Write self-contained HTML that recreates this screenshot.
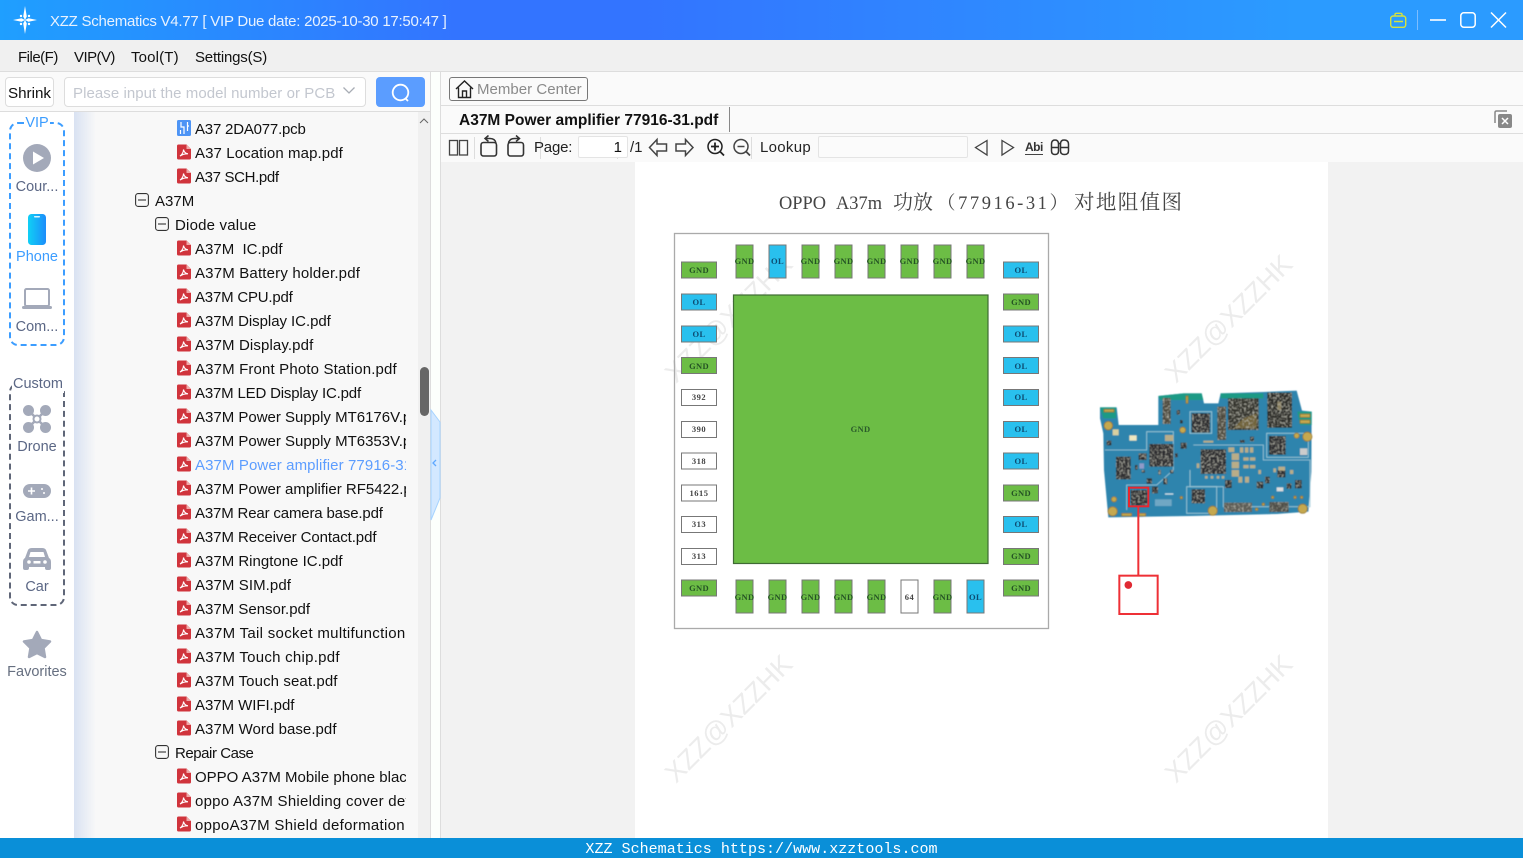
<!DOCTYPE html>
<html><head><meta charset="utf-8"><title>XZZ Schematics</title>
<style>
*{box-sizing:border-box}
html,body{margin:0;padding:0;width:1523px;height:858px;overflow:hidden;background:#fff;font-family:"Liberation Sans","Noto Sans CJK SC",sans-serif;color:#111}
.a{position:absolute;white-space:nowrap}
#tb{left:0;top:0;width:1523px;height:40px;background:linear-gradient(90deg,#1f9fff 0%,#3374ff 30%,#3374ff 42%,#2b9bff 85%,#2b9bff 100%)}
#menu{left:0;top:40px;width:1523px;height:32px;background:#f0f0f0;border-bottom:1px solid #ddd;font-size:15px}
#menu span{position:absolute;top:9px}
.row{position:absolute;left:0;height:24px;line-height:28px;font-size:15px;color:#111;width:406px;overflow:hidden;white-space:nowrap}
.row span{position:absolute;top:0}
.nav{position:absolute;left:0;width:74px;text-align:center;font-size:14.5px;color:#5b6785}
svg{position:absolute;overflow:visible}
</style></head><body>
<svg width="0" height="0" style="left:0;top:0"><defs>
<symbol id="pdf" viewBox="0 0 14 15"><path d="M1.500 0H9.500L14 4.500V13.500Q14 15 12.500 15H1.500Q0 15 0 13.500V1.500Q0 0 1.500 0Z" fill="#d0343c"/><path d="M9.500 0L14 4.500H9.500Z" fill="#f0a8a8"/><path d="M3 11.500C5 10.500 6.500 7.500 6.500 5C7 7.500 8.500 9 11 9.300C8.500 9.200 5.500 9.800 3 11.500Z" fill="none" stroke="#fff" stroke-width="1.100"/></symbol>
<symbol id="minus" viewBox="0 0 14 14"><rect x=".6" y=".6" width="12.800" height="12.800" rx="2.500" fill="none" stroke="#333" stroke-width="1.100"/><path d="M3 7H11" stroke="#333" stroke-width="1.100"/></symbol>
</defs></svg>

<div class="a" id="tb"></div>
<svg style="left:12px;top:7px" width="26" height="26" viewBox="0 0 26 26"><path d="M13 -1L14.800 9.500L13 13L11.200 9.500ZM13 27L14.800 16.500L13 13L11.200 16.500ZM1 13L9.500 11.200L13 13L9.500 14.800ZM25 13L16.500 11.200L13 13L16.500 14.800Z" fill="#fff"/><circle cx="9" cy="9" r="1.200" fill="#fff"/><circle cx="17" cy="9" r="1.200" fill="#fff"/><circle cx="9" cy="17" r="1.200" fill="#fff"/><circle cx="17" cy="17" r="1.200" fill="#fff"/></svg>
<div class="a" style="left:50px;top:13px;font-size:15px;color:#e8f2ff;letter-spacing:-.245px">XZZ Schematics V4.77 [ VIP Due date: 2025-10-30 17:50:47 ]</div>
<svg style="left:1360px;top:0" width="163" height="40" fill="none"><rect x="30.700" y="16" width="15" height="11.300" rx="2.500" stroke="#d6e23e" stroke-width="1.400"/><path d="M35 16V14.500Q35 13.300 36.500 13.300H40.500Q42 13.300 42 14.500V16M34 21.500H43" stroke="#d6e23e" stroke-width="1.400"/><path d="M57.500 10V30" stroke="#7dbdff" stroke-width="1"/><path d="M70 20H86" stroke="#fff" stroke-width="1.600"/><rect x="100.800" y="12.800" width="14.400" height="14.400" rx="3" stroke="#fff" stroke-width="1.500"/><path d="M131 12.500L146 27.500M146 12.500L131 27.500" stroke="#fff" stroke-width="1.500"/></svg>

<div class="a" id="menu"><span style="left:18px;letter-spacing:-.5px">File(F)</span><span style="left:74px;letter-spacing:-.55px">VIP(V)</span><span style="left:131px;letter-spacing:.15px">Tool(T)</span><span style="left:195px;letter-spacing:-.2px">Settings(S)</span></div>

<!-- Left top search -->
<div class="a" style="left:0;top:72px;width:430px;height:40px;background:#fafafa;border-bottom:1px solid #ddd"></div>
<div class="a" style="left:5px;top:77px;width:49px;height:30px;border:1px solid #ddd;border-radius:4px;background:#fff;font-size:15.200px;line-height:31px;text-align:center">Shrink</div>
<div class="a" style="left:64px;top:77px;width:302px;height:30px;border:1px solid #ddd;border-radius:4px;background:#fff;font-size:15px;line-height:31px;padding-left:8px;color:#c3c7cf;letter-spacing:.06px">Please input the model number or PCB</div>
<svg style="left:342px;top:86px" width="14" height="10" fill="none"><path d="M1.500 1.500L7 7L12.500 1.500" stroke="#a8adb5" stroke-width="1.300"/></svg>
<div class="a" style="left:376px;top:77px;width:49px;height:30px;background:#5b9dff;border-radius:4px"></div>
<svg style="left:390px;top:82px" width="22" height="21" fill="none"><circle cx="10.500" cy="10.500" r="7.800" stroke="#fff" stroke-width="1.800"/><path d="M15.500 16.500L18 19" stroke="#fff" stroke-width="1.800"/></svg>

<!-- Sidebar -->
<div class="a" style="left:0;top:112px;width:74px;height:726px;background:#fff"></div>
<div class="a" style="left:9px;top:122px;width:56px;height:224px;border:2px dashed #3c9dff;border-radius:9px"></div>
<div class="a" style="left:24px;top:114px;width:26px;height:18px;background:#fff;text-align:center;font-size:14.500px;color:#3c9dff;line-height:18px">VIP</div>
<svg style="left:23px;top:144px" width="28" height="28"><circle cx="14" cy="14" r="14" fill="#a3a9b9"/><path d="M10 7.500L21 14L10 20.500Z" fill="#fff"/></svg>
<div class="nav" style="top:179px">Cour...</div>
<svg style="left:28px;top:214px" width="18" height="31"><defs><linearGradient id="ph" x1="0" x2="1" y1="0" y2="0"><stop offset="0" stop-color="#10d0f5"/><stop offset="1" stop-color="#1c8dfb"/></linearGradient></defs><rect width="18" height="31" rx="3.500" fill="url(#ph)"/><rect x="6" y="2" width="6" height="1.500" rx=".7" fill="#d8f6ff"/></svg>
<div class="nav" style="top:249px;color:#3c9dff">Phone</div>
<svg style="left:22px;top:288px" width="30" height="22" fill="none"><rect x="3" y="1" width="24" height="17" rx="1.500" stroke="#a3a9b9" stroke-width="2"/><rect x="0" y="18" width="30" height="3" rx="1.500" fill="#a3a9b9"/></svg>
<div class="nav" style="top:319px">Com...</div>

<div class="a" style="left:9px;top:383px;width:56px;height:223px;border:2px dashed #5f6678;border-radius:9px"></div>
<div class="a" style="left:12px;top:375px;width:52px;height:18px;background:#fff;text-align:center;font-size:14.500px;color:#5b6785;line-height:18px">Custom</div>
<svg style="left:22px;top:404px" width="30" height="30" fill="none"><path d="M8 8L22 22M22 8L8 22" stroke="#a3a9b9" stroke-width="2.500"/><circle cx="15" cy="15" r="3.500" fill="#fff" stroke="#a3a9b9" stroke-width="2"/><circle cx="6.500" cy="6.500" r="5.500" fill="#a3a9b9"/><circle cx="23.500" cy="6.500" r="5.500" fill="#a3a9b9"/><circle cx="6.500" cy="23.500" r="5.500" fill="#a3a9b9"/><circle cx="23.500" cy="23.500" r="5.500" fill="#a3a9b9"/></svg>
<div class="nav" style="top:439px">Drone</div>
<svg style="left:23px;top:484px" width="28" height="14"><rect width="28" height="14" rx="7" fill="#a3a9b9"/><path d="M5 7H12M8.500 3.500V10.500" stroke="#fff" stroke-width="1.600"/><circle cx="19" cy="5" r="1" fill="#fff"/><circle cx="21" cy="9" r="1" fill="#fff"/></svg>
<div class="nav" style="top:509px">Gam...</div>
<svg style="left:23px;top:547px" width="28" height="24"><path d="M2 11L5 3Q6 1 9 1H19Q22 1 23 3L26 11Q28 12 28 15V21Q28 23 26 23H24Q22 23 22 21V20H6V21Q6 23 4 23H2Q0 23 0 21V15Q0 12 2 11Z" fill="#a3a9b9"/><path d="M6 10L7.500 5H20.500L22 10Z" fill="#fff"/><circle cx="6" cy="15" r="1.800" fill="#fff"/><circle cx="22" cy="15" r="1.800" fill="#fff"/><rect x="10.500" y="14" width="7" height="2.500" fill="#fff"/></svg>
<div class="nav" style="top:579px">Car</div>
<svg style="left:22px;top:630px" width="30" height="29"><path d="M15 2L19 10L28 11.500L21.500 18L23 27L15 23L7 27L8.500 18L2 11.500L11 10Z" fill="#a3a9b9" stroke="#a3a9b9" stroke-width="2.500" stroke-linejoin="round"/></svg>
<div class="nav" style="top:664px;color:#666f80">Favorites</div>

<!-- Tree -->
<div class="a" style="left:74px;top:112px;width:344px;height:726px;background:linear-gradient(90deg,#d9e2f2 0,#f8f8f8 22px,#f8f8f8 100%)"></div>
<div class="a" style="left:74px;top:112px;width:344px;height:726px;overflow:hidden">
<div style="position:absolute;left:-74px;top:-112px;width:420px;height:900px">
<svg style="left:177px;top:120px" width="14" height="16"><rect width="14" height="16" rx="1.500" fill="#4d94f5"/><path d="M4 2V7H7V14M3.500 10V14M10.500 2V6H12M10.500 6V11" stroke="#fff" stroke-width="1.200" fill="none"/></svg>
<div class="row" style="top:116px"><span style="left:195px;letter-spacing:-.2px">A37 2DA077.pcb</span></div>
<svg style="left:177px;top:144px" width="14" height="16"><use href="#pdf"/></svg><div class="row" style="top:140px"><span style="left:195px;letter-spacing:.1px">A37 Location map.pdf</span></div>
<svg style="left:177px;top:168px" width="14" height="16"><use href="#pdf"/></svg><div class="row" style="top:164px"><span style="left:195px;letter-spacing:-.35px">A37 SCH.pdf</span></div>
<svg style="left:135px;top:193px" width="14" height="14"><use href="#minus"/></svg><div class="row" style="top:188px"><span style="left:155px">A37M</span></div>
<svg style="left:155px;top:217px" width="14" height="14"><use href="#minus"/></svg><div class="row" style="top:212px"><span style="left:175px;letter-spacing:.2px">Diode value</span></div>
<svg style="left:177px;top:240px" width="14" height="16"><use href="#pdf"/></svg><div class="row" style="top:236px"><span style="left:195px">A37M&nbsp; IC.pdf</span></div>
<svg style="left:177px;top:264px" width="14" height="16"><use href="#pdf"/></svg><div class="row" style="top:260px"><span style="left:195px;letter-spacing:.18px">A37M Battery holder.pdf</span></div>
<svg style="left:177px;top:288px" width="14" height="16"><use href="#pdf"/></svg><div class="row" style="top:284px"><span style="left:195px;letter-spacing:-.2px">A37M CPU.pdf</span></div>
<svg style="left:177px;top:312px" width="14" height="16"><use href="#pdf"/></svg><div class="row" style="top:308px"><span style="left:195px;letter-spacing:-.05px">A37M Display IC.pdf</span></div>
<svg style="left:177px;top:336px" width="14" height="16"><use href="#pdf"/></svg><div class="row" style="top:332px"><span style="left:195px;letter-spacing:.12px">A37M Display.pdf</span></div>
<svg style="left:177px;top:360px" width="14" height="16"><use href="#pdf"/></svg><div class="row" style="top:356px"><span style="left:195px;letter-spacing:.15px">A37M Front Photo Station.pdf</span></div>
<svg style="left:177px;top:384px" width="14" height="16"><use href="#pdf"/></svg><div class="row" style="top:380px"><span style="left:195px;letter-spacing:-.18px">A37M LED Display IC.pdf</span></div>
<svg style="left:177px;top:408px" width="14" height="16"><use href="#pdf"/></svg><div class="row" style="top:404px"><span style="left:195px">A37M Power Supply MT6176V.pdf</span></div>
<svg style="left:177px;top:432px" width="14" height="16"><use href="#pdf"/></svg><div class="row" style="top:428px"><span style="left:195px">A37M Power Supply MT6353V.pdf</span></div>
<svg style="left:177px;top:456px" width="14" height="16"><use href="#pdf"/></svg><div class="row" style="top:452px"><span style="left:195px;color:#5c9dff;letter-spacing:.1px">A37M Power amplifier 77916-31.pdf</span></div>
<svg style="left:177px;top:480px" width="14" height="16"><use href="#pdf"/></svg><div class="row" style="top:476px"><span style="left:195px">A37M Power amplifier RF5422.pdf</span></div>
<svg style="left:177px;top:504px" width="14" height="16"><use href="#pdf"/></svg><div class="row" style="top:500px"><span style="left:195px;letter-spacing:-.16px">A37M Rear camera base.pdf</span></div>
<svg style="left:177px;top:528px" width="14" height="16"><use href="#pdf"/></svg><div class="row" style="top:524px"><span style="left:195px;letter-spacing:-.08px">A37M Receiver Contact.pdf</span></div>
<svg style="left:177px;top:552px" width="14" height="16"><use href="#pdf"/></svg><div class="row" style="top:548px"><span style="left:195px">A37M Ringtone IC.pdf</span></div>
<svg style="left:177px;top:576px" width="14" height="16"><use href="#pdf"/></svg><div class="row" style="top:572px"><span style="left:195px;letter-spacing:.08px">A37M SIM.pdf</span></div>
<svg style="left:177px;top:600px" width="14" height="16"><use href="#pdf"/></svg><div class="row" style="top:596px"><span style="left:195px">A37M Sensor.pdf</span></div>
<svg style="left:177px;top:624px" width="14" height="16"><use href="#pdf"/></svg><div class="row" style="top:620px"><span style="left:195px;letter-spacing:.3px">A37M Tail socket multifunction</span></div>
<svg style="left:177px;top:648px" width="14" height="16"><use href="#pdf"/></svg><div class="row" style="top:644px"><span style="left:195px;letter-spacing:.26px">A37M Touch chip.pdf</span></div>
<svg style="left:177px;top:672px" width="14" height="16"><use href="#pdf"/></svg><div class="row" style="top:668px"><span style="left:195px;letter-spacing:.1px">A37M Touch seat.pdf</span></div>
<svg style="left:177px;top:696px" width="14" height="16"><use href="#pdf"/></svg><div class="row" style="top:692px"><span style="left:195px;letter-spacing:-.05px">A37M WIFI.pdf</span></div>
<svg style="left:177px;top:720px" width="14" height="16"><use href="#pdf"/></svg><div class="row" style="top:716px"><span style="left:195px;letter-spacing:.05px">A37M Word base.pdf</span></div>
<svg style="left:155px;top:745px" width="14" height="14"><use href="#minus"/></svg><div class="row" style="top:740px"><span style="left:175px;letter-spacing:-.45px">Repair Case</span></div>
<svg style="left:177px;top:768px" width="14" height="16"><use href="#pdf"/></svg><div class="row" style="top:764px"><span style="left:195px">OPPO A37M Mobile phone black screen</span></div>
<svg style="left:177px;top:792px" width="14" height="16"><use href="#pdf"/></svg><div class="row" style="top:788px"><span style="left:195px;letter-spacing:.25px">oppo A37M Shielding cover deformation</span></div>
<svg style="left:177px;top:816px" width="14" height="16"><use href="#pdf"/></svg><div class="row" style="top:812px"><span style="left:195px;letter-spacing:.3px">oppoA37M Shield deformation</span></div>
</div></div>
<!-- Scrollbar -->
<div class="a" style="left:418px;top:112px;width:12px;height:726px;background:#f0f0f0"></div>
<svg style="left:419px;top:117px" width="10" height="8" fill="none"><path d="M1 6L5 2L9 6" stroke="#666" stroke-width="1"/></svg>
<div class="a" style="left:420px;top:367px;width:9px;height:49px;border-radius:5px;background:#666"></div>
<div class="a" style="left:430px;top:72px;width:1px;height:766px;background:#ddd"></div>
<div class="a" style="left:431px;top:72px;width:9px;height:766px;background:#fcfffc"></div>
<div class="a" style="left:440px;top:72px;width:1px;height:766px;background:#ddd"></div>
<svg style="left:431px;top:410px" width="10" height="110"><path d="M0 0L9 12V88L0 110Z" fill="#d3e8ff" stroke="#a6d3ff" stroke-width="1"/><path d="M5 50L2 53L5 56" fill="none" stroke="#5ea8ff" stroke-width="1.300"/></svg>

<!-- Right head -->
<div class="a" style="left:441px;top:72px;width:1082px;height:34px;background:#fafafa;border-bottom:1px solid #ddd"></div>
<div class="a" style="left:449px;top:77px;width:139px;height:24px;border:1px solid #777;border-radius:3px;background:#fafafa;font-size:15px;line-height:23px;padding-left:27px;color:#8a8a8a;letter-spacing:.03px">Member Center</div>
<svg style="left:455px;top:79px" width="19" height="20" fill="none" stroke="#222" stroke-width="1.400"><path d="M1 10L9.500 2L18 10M3.500 8.500V18.500H15.500V8.500M7.500 18.500V12H11.500V18.500"/></svg>
<div class="a" style="left:441px;top:106px;width:1082px;height:28px;background:#fafafa;border-bottom:1px solid #ddd"></div>
<div class="a" style="left:459px;top:112px;font-size:15.500px;font-weight:bold;color:#111">A37M Power amplifier 77916-31.pdf</div>
<div class="a" style="left:729px;top:107px;width:1px;height:25px;background:#888"></div>
<svg style="left:1494px;top:110px" width="18" height="18"><path d="M1 13V2.500Q1 1 2.500 1H13" fill="none" stroke="#888" stroke-width="1.500"/><rect x="4" y="4" width="14" height="14" rx="2" fill="#888"/><path d="M8 8L14 14M14 8L8 14" stroke="#fff" stroke-width="1.500"/></svg>

<!-- Toolbar -->
<div class="a" style="left:441px;top:134px;width:1082px;height:28px;background:#fafafa"></div>
<svg style="left:441px;top:134px" width="640" height="28" fill="none" stroke="#444" stroke-width="1.300">
<rect x="8.500" y="6.500" width="8" height="14.500"/><rect x="18.500" y="6.500" width="8" height="14.500"/>
<path d="M33.500 3V25M99.500 3V25M176.500 3V25M310.500 3V25" stroke="#ddd" stroke-width="1"/>
<rect x="40" y="8.500" width="15.500" height="13.500" rx="2.500" stroke="#333" stroke-width="1.600"/><path d="M55 9Q54 4.500 49 4.500H44.500M47.500 1.500L44 4.500L47.500 7.500" stroke="#333" stroke-width="1.500"/>
<rect x="67" y="8.500" width="15.500" height="13.500" rx="2.500" stroke="#333" stroke-width="1.600"/><path d="M67.500 9Q68.500 4.500 73.500 4.500H78M75 1.500L78.500 4.500L75 7.500" stroke="#333" stroke-width="1.500"/>
<path d="M208.500 13.500L216 5.500V10H225.500V17H216V21.500Z" stroke-width="1.500"/><path d="M252 13.500L244.500 5.500V10H235V17H244.500V21.500Z" stroke-width="1.500"/>
<circle cx="274" cy="12.500" r="7" stroke="#222" stroke-width="1.500"/><path d="M279 17.500L283 21.500" stroke="#222" stroke-width="1.800"/><path d="M270 12.500H278M274 8.500V16.500" stroke="#222" stroke-width="1.800"/>
<circle cx="300" cy="12.500" r="7" stroke-width="1.500"/><path d="M305 17.500L309 21.500" stroke-width="1.800"/><path d="M296.500 12.500H303.500" stroke-width="1.500"/>
<path d="M546 6.500L534.500 13.500L546 21Z"/><path d="M561 6.500L572.500 13.500L561 21Z"/>
<path d="M584 20.500H602" stroke-width="1"/>
<path d="M610.500 17V10Q610.500 6 614 6Q617.500 6 617.500 10V17Q617.500 20.500 614 20.500Q610.500 20.500 610.500 17ZM619.500 17V10Q619.500 6 623 6Q627.500 6 627.500 10V17Q627.500 20.500 623.500 20.500Q619.500 20.500 619.500 17ZM617.500 9.500H619.500M610.500 13.500H617.500M619.500 13.500H627.500" stroke="#333" stroke-width="1.500"/>
</svg>
<div class="a" style="left:534px;top:139px;font-size:15px;color:#222;letter-spacing:-.2px">Page:</div>
<div class="a" style="left:578px;top:136px;width:50px;height:22px;background:#fff;border:1px solid #e4e4e4;font-size:15px;line-height:21px;text-align:right;padding-right:5px;border-radius:2px">1</div>
<div class="a" style="left:630px;top:139px;font-size:15px;color:#222">/1</div>
<div class="a" style="left:760px;top:139px;font-size:15px;color:#222;letter-spacing:.3px">Lookup</div>
<div class="a" style="left:818px;top:136px;width:150px;height:22px;background:#fbfbfb;border:1px solid #e4e4e4;border-radius:2px"></div>
<div class="a" style="left:1025px;top:140px;font-size:12px;font-weight:bold;color:#333;letter-spacing:-.5px">Abi</div>

<!-- Viewer -->
<div class="a" style="left:441px;top:162px;width:1082px;height:676px;background:#f2f2f2"></div>
<div class="a" style="left:635px;top:162px;width:693px;height:676px;background:#fff"></div>

<svg style="left:0;top:0" width="1523" height="858" font-family="'Liberation Serif','Noto Serif CJK SC',serif">
<g fill="#ececec" font-size="27" font-family="'Liberation Sans',sans-serif" text-anchor="middle">
<text transform="translate(735 325) rotate(-45)">XZZ@XZZHK</text>
<text transform="translate(1235 325) rotate(-45)">XZZ@XZZHK</text>
<text transform="translate(735 725) rotate(-45)">XZZ@XZZHK</text>
<text transform="translate(1235 725) rotate(-45)">XZZ@XZZHK</text>
</g>
<g font-size="18.500" fill="#444">
<text x="779" y="209" textLength="47" lengthAdjust="spacingAndGlyphs">OPPO</text>
<text x="836" y="209" textLength="46" lengthAdjust="spacingAndGlyphs">A37m</text>
<text x="893" y="209" font-size="20" textLength="40" lengthAdjust="spacing">功放</text>
<text x="937" y="209" textLength="131" lengthAdjust="spacing">（77916-31）</text>
<text x="1074" y="209" font-size="20.500" textLength="108" lengthAdjust="spacing">对地阻值图</text>
</g>
<rect x="674.500" y="233.500" width="374" height="395" fill="none" stroke="#aaa" stroke-width="1.300"/>
<rect x="733.500" y="295" width="254.500" height="268.500" fill="#6cbd45" stroke="#3f6b34" stroke-width="1.200"/>
<text x="860.500" y="432" font-size="8.500" font-weight="bold" fill="#2a5a2a" text-anchor="middle" letter-spacing=".3">GND</text>
<g stroke="#777" stroke-width="1">
<g fill="#6cbd45"><rect x="681.500" y="262" width="35" height="16"/><rect x="681.500" y="357.500" width="35" height="16"/><rect x="681.500" y="580" width="35" height="16"/>
<rect x="1003.500" y="294" width="35" height="16"/><rect x="1003.500" y="485" width="35" height="16"/><rect x="1003.500" y="548.500" width="35" height="16"/><rect x="1003.500" y="580" width="35" height="16"/>
<rect x="736" y="245" width="17" height="33"/><rect x="802" y="245" width="17" height="33"/><rect x="835" y="245" width="17" height="33"/><rect x="868" y="245" width="17" height="33"/><rect x="901" y="245" width="17" height="33"/><rect x="934" y="245" width="17" height="33"/><rect x="967" y="245" width="17" height="33"/>
<rect x="736" y="580" width="17" height="33"/><rect x="769" y="580" width="17" height="33"/><rect x="802" y="580" width="17" height="33"/><rect x="835" y="580" width="17" height="33"/><rect x="868" y="580" width="17" height="33"/><rect x="934" y="580" width="17" height="33"/></g>
<g fill="#29c0ee"><rect x="681.500" y="294" width="35" height="16"/><rect x="681.500" y="326" width="35" height="16"/>
<rect x="1003.500" y="262" width="35" height="16"/><rect x="1003.500" y="326" width="35" height="16"/><rect x="1003.500" y="357.500" width="35" height="16"/><rect x="1003.500" y="389.500" width="35" height="16"/><rect x="1003.500" y="421.500" width="35" height="16"/><rect x="1003.500" y="453" width="35" height="16"/><rect x="1003.500" y="516.500" width="35" height="16"/>
<rect x="769" y="245" width="17" height="33"/><rect x="967" y="580" width="17" height="33"/></g>
<g fill="#fff"><rect x="681.500" y="389.500" width="35" height="16"/><rect x="681.500" y="421.500" width="35" height="16"/><rect x="681.500" y="453" width="35" height="16"/><rect x="681.500" y="485" width="35" height="16"/><rect x="681.500" y="516.500" width="35" height="16"/><rect x="681.500" y="548.500" width="35" height="16"/><rect x="901" y="580" width="17" height="33"/></g>
</g>
<g font-size="8.500" font-weight="bold" text-anchor="middle" fill="#245224" letter-spacing=".3">
<text x="699" y="273">GND</text><text x="699" y="369">GND</text><text x="699" y="591">GND</text>
<text x="1021" y="305">GND</text><text x="1021" y="496">GND</text><text x="1021" y="559">GND</text><text x="1021" y="591">GND</text>
<text x="744.500" y="264">GND</text><text x="810.500" y="264">GND</text><text x="843.500" y="264">GND</text><text x="876.500" y="264">GND</text><text x="909.500" y="264">GND</text><text x="942.500" y="264">GND</text><text x="975.500" y="264">GND</text>
<text x="744.500" y="600">GND</text><text x="777.500" y="600">GND</text><text x="810.500" y="600">GND</text><text x="843.500" y="600">GND</text><text x="876.500" y="600">GND</text><text x="942.500" y="600">GND</text>
</g>
<g font-size="8.500" font-weight="bold" text-anchor="middle" fill="#0d4a70" letter-spacing=".3">
<text x="699" y="305">OL</text><text x="699" y="337">OL</text>
<text x="1021" y="273">OL</text><text x="1021" y="337">OL</text><text x="1021" y="369">OL</text><text x="1021" y="400">OL</text><text x="1021" y="432">OL</text><text x="1021" y="464">OL</text><text x="1021" y="527">OL</text>
<text x="777.500" y="264">OL</text><text x="975.500" y="600">OL</text>
</g>
<g font-size="8.500" font-weight="bold" text-anchor="middle" fill="#444" letter-spacing=".5">
<text x="699" y="400">392</text><text x="699" y="432">390</text><text x="699" y="464">318</text><text x="699" y="496">1615</text><text x="699" y="527">313</text><text x="699" y="559">313</text><text x="909.500" y="600">64</text>
</g>

<!-- PCB (zoom coordinates) -->
<defs>
<filter id="bl" x="-5%" y="-5%" width="110%" height="110%"><feGaussianBlur stdDeviation="1.300"/></filter>
<filter id="nz" x="0" y="0" width="100%" height="100%">
<feTurbulence type="fractalNoise" baseFrequency=".16" numOctaves="2" seed="4" result="n"/>
<feColorMatrix in="n" type="matrix" values="0 0 0 0 .6  0 0 0 0 .6  0 0 0 0 .52  2 0 0 0 -.95" result="s"/>
<feComposite in="s" in2="SourceAlpha" operator="in" result="sp"/>
<feMerge><feMergeNode in="SourceGraphic"/><feMergeNode in="sp"/></feMerge>
</filter>
</defs>
<g transform="translate(1090 370) scale(.33333)">
<g filter="url(#bl)">
<path d="M30 112H80L86 165H205V78L280 70H335L342 100H385L392 70L520 66L620 62L636 122L665 125L664 305L655 425L560 432L300 438L55 442L42 300L40 190L30 145Z" fill="#2f84ad"/>
<path d="M30 112H78V145H40Z" fill="#1c9a85"/><path d="M205 78L280 70H335L340 90H210Z" fill="#1c9a85"/><path d="M392 70H520V85H392Z" fill="#1c9a85"/><path d="M622 125H665V165H630Z" fill="#1c9a85"/>
<g fill="none" stroke="#9fc9d8" stroke-width="2.500"><path d="M45 240H170V185H250V300L200 345H110V420"/><path d="M310 225H520V270H660V410H400V350H300V300"/><path d="M290 350H380V430H290Z"/><path d="M530 190H655V262H530Z"/><path d="M300 125H365V190H300Z"/></g>
<g fill="#2a2c2e" filter="url(#nz)">
<rect x="218" y="84" width="24" height="78" fill="#4e493c"/><rect x="382" y="110" width="26" height="100" fill="#4e493c"/>
<rect x="305" y="130" width="55" height="58"/><rect x="178" y="222" width="72" height="68"/><rect x="78" y="260" width="44" height="68"/>
<rect x="332" y="238" width="76" height="74"/><rect x="537" y="198" width="50" height="56"/><rect x="122" y="360" width="50" height="46"/><rect x="305" y="358" width="40" height="42"/>
<rect x="402" y="398" width="84" height="28" fill="#5c5c54"/><rect x="538" y="396" width="58" height="30" fill="#4d4d47"/>
<rect x="414" y="85" width="92" height="95" fill="#33332b"/><path d="M460 145L500 130V175H430Z" fill="#6f6238"/>
<rect x="532" y="68" width="74" height="105" fill="#292926"/><rect x="562" y="95" width="12" height="25" fill="#8a8060"/>
<rect x="272" y="218" width="18" height="18"/><rect x="146" y="250" width="24" height="20"/><rect x="186" y="350" width="18" height="20"/><rect x="170" y="325" width="16" height="16"/><rect x="220" y="325" width="12" height="18"/><rect x="562" y="300" width="24" height="22"/><rect x="615" y="330" width="20" height="25"/><rect x="405" y="330" width="20" height="24"/><rect x="500" y="335" width="20" height="20"/><rect x="525" y="320" width="14" height="20"/><rect x="50" y="212" width="14" height="14"/>
<rect x="255" y="250" width="8" height="12"/><rect x="240" y="300" width="10" height="10"/><rect x="205" y="300" width="8" height="14"/><rect x="135" y="285" width="8" height="14"/><rect x="155" y="300" width="10" height="8"/><rect x="260" y="120" width="10" height="14"/><rect x="270" y="150" width="8" height="10"/><rect x="590" y="340" width="14" height="16"/><rect x="480" y="200" width="12" height="14"/><rect x="450" y="210" width="14" height="8"/>
</g>
<g fill="#b9ad88">
<rect x="425" y="250" width="22" height="20"/><rect x="425" y="275" width="22" height="20"/><rect x="425" y="300" width="22" height="20"/><rect x="450" y="232" width="10" height="16"/><rect x="465" y="232" width="10" height="16"/><rect x="480" y="232" width="10" height="16"/><rect x="460" y="262" width="16" height="10"/><rect x="480" y="262" width="16" height="10"/><rect x="460" y="285" width="16" height="10"/><rect x="480" y="285" width="16" height="10"/><rect x="445" y="320" width="12" height="18"/><rect x="465" y="320" width="12" height="18"/><rect x="225" y="195" width="25" height="18"/><rect x="118" y="196" width="22" height="16" fill="#eee7c0"/><rect x="68" y="178" width="18" height="18" fill="#d8d0a0"/><rect x="560" y="352" width="20" height="12" fill="#ddd"/><rect x="565" y="290" width="20" height="12"/><rect x="630" y="235" width="22" height="20" fill="#ccc"/><rect x="340" y="212" width="30" height="6"/><rect x="415" y="232" width="18" height="14"/>
<rect x="148" y="280" width="14" height="16" fill="#8f9ac8"/><rect x="345" y="318" width="8" height="8"/><rect x="362" y="318" width="8" height="8"/><rect x="380" y="318" width="8" height="8"/><rect x="395" y="318" width="8" height="8"/><rect x="320" y="280" width="8" height="14"/><rect x="600" y="300" width="10" height="12"/><rect x="550" y="295" width="8" height="12"/><rect x="505" y="300" width="8" height="12"/><rect x="225" y="370" width="25" height="4" fill="#cfe0e8"/><rect x="195" y="388" width="50" height="20" fill="#6fa7c4"/>
</g>
<g fill="#c5a850" stroke="#8a6a20" stroke-width="2">
<circle cx="55" cy="167" r="13"/><circle cx="68" cy="424" r="14"/><circle cx="72" cy="388" r="8"/><circle cx="368" cy="422" r="14"/><circle cx="638" cy="416" r="14"/><circle cx="652" cy="200" r="14"/><circle cx="278" cy="180" r="9"/><circle cx="620" cy="197" r="8"/><circle cx="274" cy="383" r="4"/><circle cx="520" cy="403" r="4"/><circle cx="500" cy="418" r="4"/><circle cx="615" cy="382" r="4"/><circle cx="635" cy="382" r="4"/><circle cx="548" cy="382" r="4"/>
<rect x="95" y="430" width="30" height="8"/><rect x="145" y="430" width="22" height="8"/><rect x="630" y="132" width="30" height="10"/><rect x="630" y="150" width="30" height="10"/><rect x="42" y="118" width="30" height="8"/><rect x="288" y="78" width="6" height="22"/>
</g>
</g>
<rect x="117" y="353" width="58" height="56" fill="none" stroke="#e8262d" stroke-width="6"/>
<path d="M145 409V616" stroke="#ee3036" stroke-width="6"/>
<rect x="88" y="617" width="115" height="115" fill="#fff" stroke="#ee3036" stroke-width="6"/>
<circle cx="115" cy="645" r="11.500" fill="#e02a33"/>
</g>
</svg>

<!-- Footer -->
<div class="a" style="left:0;top:838px;width:1523px;height:20px;background:#0a8fd8;color:#fff;font-family:'Liberation Mono',monospace;font-size:15.050px;line-height:22px;text-align:center">XZZ Schematics https://www.xzztools.com</div>
</body></html>
